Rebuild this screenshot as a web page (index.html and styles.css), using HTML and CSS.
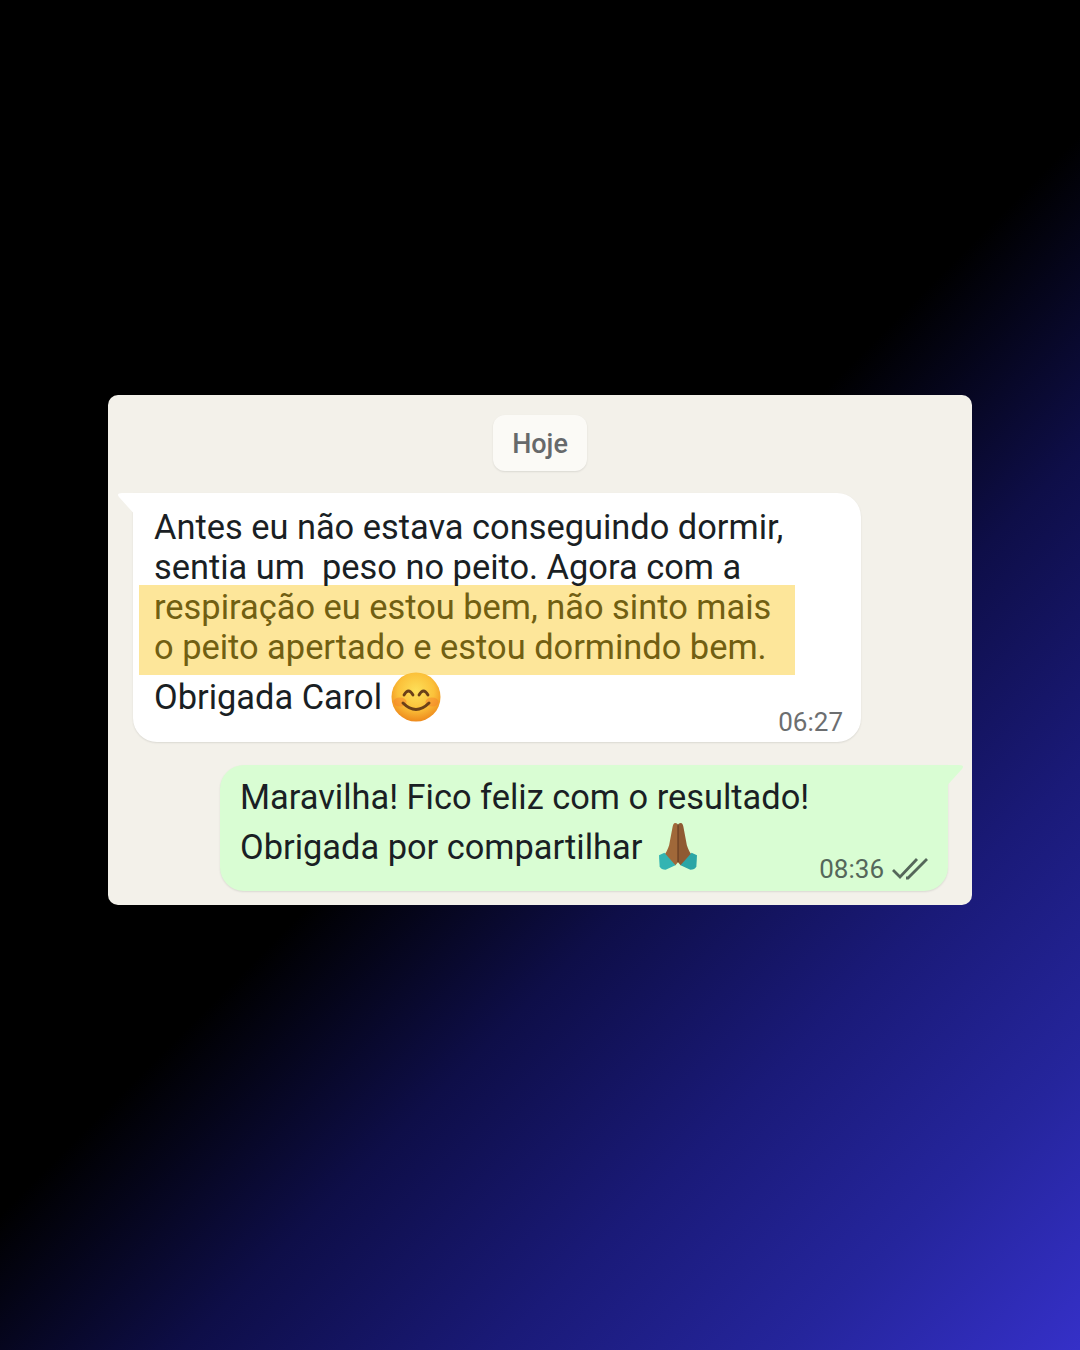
FILE: index.html
```html
<!DOCTYPE html>
<html lang="pt-BR">
<head>
  <meta charset="UTF-8" />
  <title>Conversa</title>
  <link rel="stylesheet" href="styles.css">
</head>
<body>
  <div class="chat-card">
    <div class="date-row">
      <span class="date-pill">Hoje</span>
    </div>

    <div class="bubble bubble-in">
      <svg class="tail tail-in" viewBox="0 0 20 24"><path d="M20 0H5Q-1 0 2 4L20 24Z"/></svg>
      <p class="line">Antes eu não estava conseguindo dormir,</p>
      <p class="line">sentia um &nbsp;peso no peito. Agora com a</p>
      <div class="mark">
        <p class="line">respiração eu estou bem, não sinto mais</p>
        <p class="line">o peito apertado e estou dormindo bem.</p>
      </div>
      <div class="last-row last-row-in">
        <p class="line emoji-line">Obrigada Carol
          <svg class="smile" viewBox="0 0 50 50">
            <defs>
              <radialGradient id="face" cx=".5" cy=".38" r=".62">
                <stop offset="0" stop-color="#fde05a"/>
                <stop offset=".6" stop-color="#fbc13a"/>
                <stop offset="1" stop-color="#ee8a1c"/>
              </radialGradient>
            </defs>
            <circle cx="25" cy="25" r="24.5" fill="url(#face)"/>
            <ellipse cx="9" cy="30" rx="6.5" ry="4.5" fill="#f5822b" opacity=".5"/>
            <ellipse cx="41" cy="30" rx="6.5" ry="4.5" fill="#f5822b" opacity=".5"/>
            <path d="M13 23Q17.500 15 22 23M28 23Q32.500 15 37 23" fill="none" stroke="#6b4018" stroke-width="2.8" stroke-linecap="round"/>
            <path d="M12 31Q25 44 38 31" fill="none" stroke="#6b4018" stroke-width="3" stroke-linecap="round"/>
          </svg>
        </p>
        <span class="time">06:27</span>
      </div>
    </div>

    <div class="bubble bubble-out">
      <svg class="tail tail-out" viewBox="0 0 20 24"><path d="M0 0H15Q21 0 18 4L0 24Z"/></svg>
      <p class="line">Maravilha! Fico feliz com o resultado!</p>
      <div class="last-row last-row-out">
        <p class="line emoji-line">Obrigada por compartilhar
          <svg class="pray" viewBox="25 18 120 150">
            <path d="M76 20Q70 20 68 32L57 91Q50 112 42 121L62 150L77 154L85 144V30Q85 20 76 20Z" fill="#a06839"/>
            <path d="M94 20Q100 20 102 32L113 91Q120 112 128 121L108 150L93 154L85 144V30Q85 20 94 20Z" fill="#8f5a32"/>
            <path d="M85 24V144" stroke="#5a341c" stroke-width="3"/>
            <path d="M25 122L42 114L77 154L46 168Q32 168 27 158Z" fill="#33b4b2"/>
            <path d="M145 122L128 114L93 154L124 168Q138 168 143 158Z" fill="#2ba6a6"/>
          </svg>
        </p>
        <span class="time time-out">08:36
          <svg class="ticks" viewBox="0 0 36 22"><path d="M1 12L8 19L25 1M14 20L16 20L35 1" fill="none" stroke="#55675a" stroke-width="2.8"/></svg>
        </span>
      </div>
    </div>
  </div>
</body>
</html>
```

FILE: styles.css
```css
html, body {
  height: 100%;
}
body {
  margin: 0;
  width: 1080px;
  height: 1350px;
  overflow: hidden;
  background: linear-gradient(135deg, #000 50%, #0e0e48 63%, #1a1a78 76%, #25259c 88%, #3530c8 100%);
  font-family: Roboto, "Liberation Sans", sans-serif;
  color: #1a1f24;
  box-sizing: border-box;
  padding-top: 395px;
}
p {
  margin: 0;
}
.chat-card {
  width: 864px;
  height: 510px;
  margin: 0 auto;
  padding: 20px 25px 0;
  background-color: #f3f1ea;
  border-radius: 10px;
  box-sizing: border-box;
}
.date-row {
  display: flex;
  justify-content: center;
  margin-bottom: 22px;
}
.date-pill {
  width: 94px;
  height: 56px;
  padding-top: 2px;
  display: flex;
  align-items: center;
  justify-content: center;
  background-color: #fbfaf6;
  border-radius: 12px;
  box-shadow: 0 1px 2px rgba(0, 0, 0, 0.1);
  color: #66696b;
  font-size: 27px;
  font-weight: 500;
  box-sizing: border-box;
}
.bubble {
  position: relative;
  width: 728px;
  box-sizing: border-box;
  border-radius: 0 24px 24px 24px;
  box-shadow: 0 1px 2px rgba(0, 0, 0, 0.1);
}
.bubble-in {
  height: 249px;
  padding: 14px 18px 0 21px;
  background-color: #fff;
}
.bubble-out {
  height: 126px;
  margin-top: 23px;
  margin-left: 87px;
  padding: 12px 20px 0 20px;
  background-color: #d9fdd3;
  border-radius: 24px 0 24px 24px;
}
.tail {
  position: absolute;
  top: 0;
  width: 20px;
  height: 24px;
}
.tail-in {
  left: -16px;
  fill: #fff;
}
.tail-out {
  right: -16px;
  fill: #d9fdd3;
}
.line {
  font-size: 34.4px;
  line-height: 40.3px;
  white-space: nowrap;
}
.mark {
  width: 656px;
  margin: -3px 0 0 -15px;
  padding: 2px 0 8px 15px;
  box-sizing: border-box;
  background-color: #fde69a;
  color: #715f12;
}
.last-row {
  display: flex;
  justify-content: space-between;
  align-items: flex-end;
}
.last-row-in {
  margin-top: -3px;
}
.last-row-out {
  margin-top: 5px;
}
.emoji-line {
  display: flex;
  align-items: center;
  gap: 9px;
  height: 50px;
}
.smile {
  width: 50px;
  height: 50px;
}
.pray {
  width: 38px;
  height: 48px;
  margin: -2px 0 0 8px;
}
.time {
  font-size: 26px;
  line-height: 30px;
  color: #6c6e70;
  position: relative;
  top: 15px;
}
.time-out {
  display: flex;
  align-items: center;
  gap: 8px;
  top: 12px;
  color: #55675a;
}
.ticks {
  width: 36px;
  height: 22px;
}
```
